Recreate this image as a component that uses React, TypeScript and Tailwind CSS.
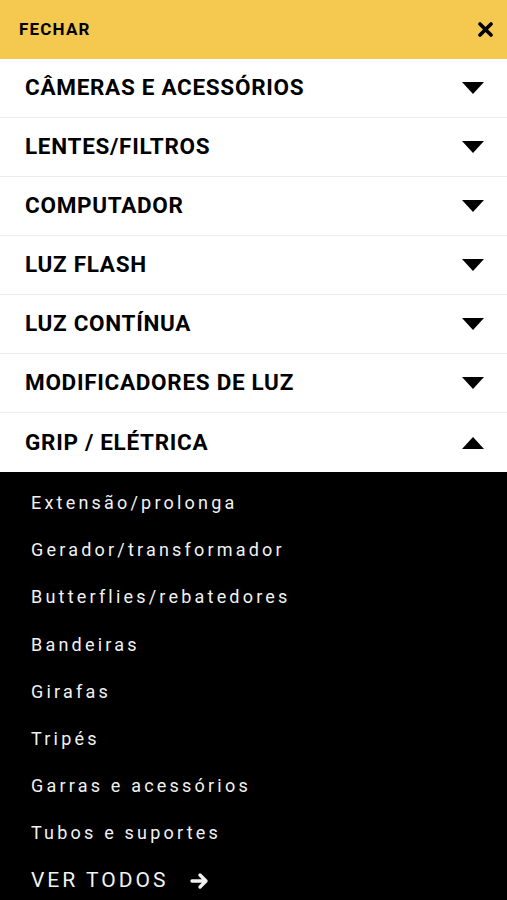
import React from "react";

const categories = [
  "CÂMERAS E ACESSÓRIOS",
  "LENTES/FILTROS",
  "COMPUTADOR",
  "LUZ FLASH",
  "LUZ CONTÍNUA",
  "MODIFICADORES DE LUZ",
];

const subItems = [
  "Extensão/prolonga",
  "Gerador/transformador",
  "Butterflies/rebatedores",
  "Bandeiras",
  "Girafas",
  "Tripés",
  "Garras e acessórios",
  "Tubos e suportes",
];

const Caret = ({ up = false }: { up?: boolean }) => (
  <svg width="22" height="12" viewBox="0 0 22 12" className="shrink-0">
    {up ? <path d="M0 12 L11 0 L22 12 Z" fill="#000" /> : <path d="M0 0 L22 0 L11 12 Z" fill="#000" />}
  </svg>
);

export default function App() {
  return (
    <div className="w-[507px] h-[900px] overflow-hidden bg-black font-['Roboto',sans-serif]">
      <div className="flex items-center justify-between h-[59px] bg-[#f5c94f] pl-[19px] pr-[14px]">
        <span className="text-[17px] font-bold text-black tracking-[1.2px]">FECHAR</span>
        <svg width="15" height="15" viewBox="0 0 15 15">
          <path d="M2 2 L13 13 M13 2 L2 13" stroke="#000" strokeWidth="3.6" strokeLinecap="round" />
        </svg>
      </div>
      <div className="bg-white">
        {categories.map((c) => (
          <div
            key={c}
            className="flex items-center justify-between h-[59px] pl-[25px] pr-[23px] border-b border-[#ececec]"
          >
            <span className="text-[22.5px] font-bold text-black tracking-[0.7px]">{c}</span>
            <Caret />
          </div>
        ))}
        <div className="flex items-center justify-between h-[59px] pl-[25px] pr-[23px]">
          <span className="text-[22.5px] font-bold text-black tracking-[0.7px]">GRIP / ELÉTRICA</span>
          <Caret up />
        </div>
      </div>
      <div className="flex flex-col pl-[31px] pt-[7px]">
        {subItems.map((s) => (
          <div key={s} className="h-[47.2px] flex items-center text-[18px] text-[#f2f2f2] tracking-[3.2px]">
            {s}
          </div>
        ))}
        <div className="h-[49px] flex items-center gap-[22px] text-[21px] text-[#f2f2f2] tracking-[3px]">
          <span>VER TODOS</span>
          <svg width="20" height="18" viewBox="0 0 20 18">
            <path d="M2 9 H16 M10 3 L16 9 L10 15" stroke="#f2f2f2" strokeWidth="3.4" fill="none" strokeLinecap="round" strokeLinejoin="round" />
          </svg>
        </div>
      </div>
    </div>
  );
}
